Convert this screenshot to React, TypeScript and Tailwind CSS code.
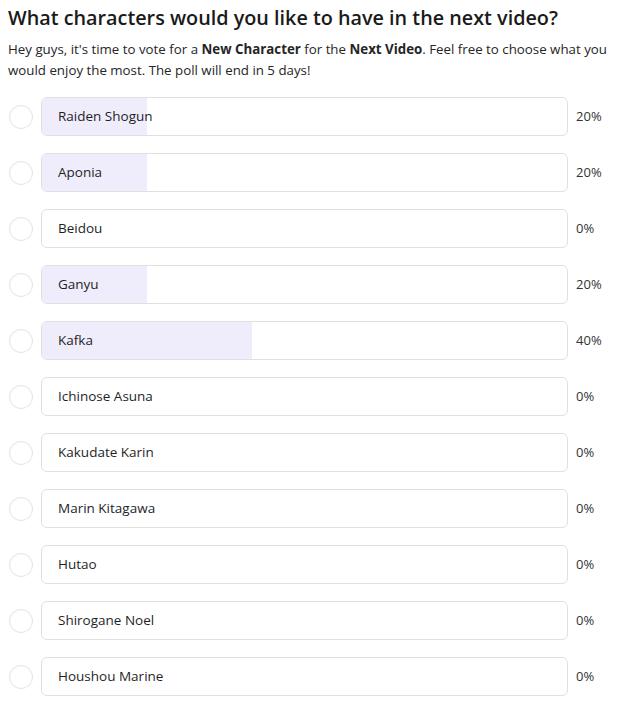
import React from "react";

type Option = { name: string; pct: number };

const options: Option[] = [
  { name: "Raiden Shogun", pct: 20 },
  { name: "Aponia", pct: 20 },
  { name: "Beidou", pct: 0 },
  { name: "Ganyu", pct: 20 },
  { name: "Kafka", pct: 40 },
  { name: "Ichinose Asuna", pct: 0 },
  { name: "Kakudate Karin", pct: 0 },
  { name: "Marin Kitagawa", pct: 0 },
  { name: "Hutao", pct: 0 },
  { name: "Shirogane Noel", pct: 0 },
  { name: "Houshou Marine", pct: 0 },
];

const PollRow = ({ option }: { option: Option }) => {
  return (
    <div className="flex items-center h-[39px]">
      <div className="w-[24px] h-[24px] ml-[9px] rounded-full border border-[#e3e3e3] bg-white shrink-0" />
      <div className="relative ml-[8px] w-[527px] h-[39px] rounded-[6px] border border-[#e0e0e0] bg-white overflow-hidden">
        <div
          className="absolute left-0 top-0 bottom-0 bg-[#efedfc]"
          style={{ width: `${option.pct}%` }}
        />
        <div className="relative h-full flex items-center pl-[16px] text-[13.5px] text-[#1f1f1f]">
          {option.name}
        </div>
      </div>
      <div className="ml-[8px] text-[13px] text-[#333]">{option.pct}%</div>
    </div>
  );
};

export default function App() {
  return (
    <div
      className="w-[625px] h-[706px] bg-white overflow-hidden px-[8px] pt-[4px]"
      style={{ fontFamily: '"Open Sans", "Noto Sans", sans-serif' }}
    >
      <h1 className="text-[19.8px] font-semibold text-[#1a1a1a] leading-[28px]">
        What characters would you like to have in the next video?
      </h1>
      <p className="mt-[7px] text-[13.3px] leading-[21px] text-[#262626]">
        Hey guys, it's time to vote for a <b>New Character</b> for the{" "}
        <b>Next Video</b>. Feel free to choose what you would enjoy the most.
        The poll will end in 5 days!
      </p>
      <div className="-ml-[8px] mt-[16px] flex flex-col gap-[17px]">
        {options.map((o) => (
          <PollRow key={o.name} option={o} />
        ))}
      </div>
    </div>
  );
}
